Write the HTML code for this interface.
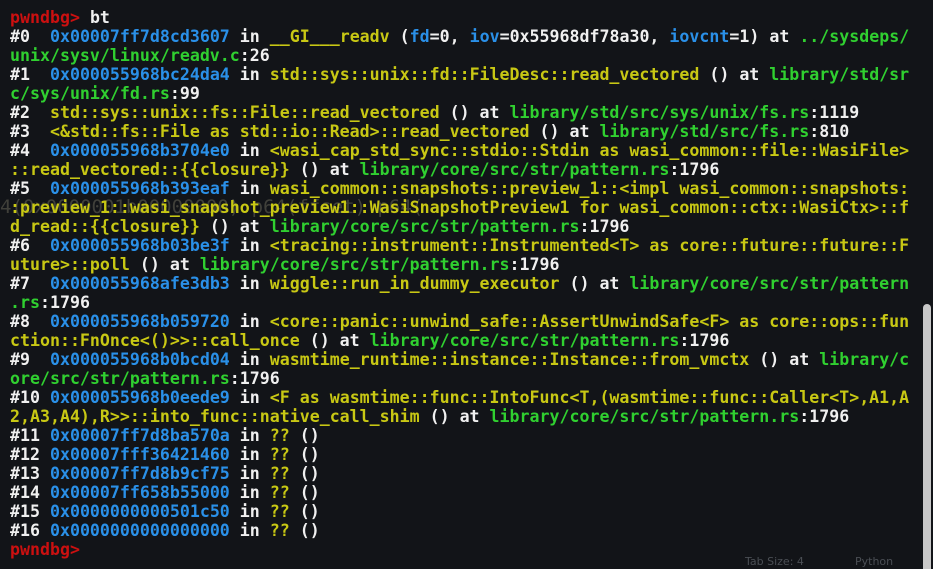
<!DOCTYPE html>
<html><head><meta charset="utf-8"><style>
html,body{margin:0;padding:0;background:#121418;width:933px;height:569px;overflow:hidden}
pre{position:absolute;left:10px;top:8px;margin:0;font-family:"DejaVu Sans Mono","Liberation Mono",monospace;font-weight:bold;font-size:16.6px;line-height:19px;color:#f0f0f0;white-space:pre}
.r{color:#cc1010}.b{color:#2a90e8}.y{color:#c8c814}.g{color:#30d030}.w{color:#f0f0f0}
.ghost{position:absolute;left:0;top:196px;font-family:"DejaVu Sans Mono",monospace;font-size:19px;color:#40403a;white-space:pre}
.sb{position:absolute;left:923px;top:304px;width:8px;height:265px;background:#c8c8c8;border-radius:4px 4px 0 0}
.st{position:absolute;top:555px;font-family:"DejaVu Sans",sans-serif;font-size:11px;color:#4a4e54}
</style></head><body>
<div class="ghost">4(0x0000001b00000000) p64(ffset) p64(</div>
<pre><span class="r">pwndbg&gt; </span>bt
#0  <span class="b">0x00007ff7d8cd3607</span> in <span class="y">__GI___readv</span> (<span class="b">fd</span>=0, <span class="b">iov</span>=0x55968df78a30, <span class="b">iovcnt</span>=1) at <span class="g">../sysdeps/</span>
<span class="g">unix/sysv/linux/readv.c</span>:26
#1  <span class="b">0x000055968bc24da4</span> in <span class="y">std::sys::unix::fd::FileDesc::read_vectored</span> () at <span class="g">library/std/sr</span>
<span class="g">c/sys/unix/fd.rs</span>:99
#2  <span class="y">std::sys::unix::fs::File::read_vectored</span> () at <span class="g">library/std/src/sys/unix/fs.rs</span>:1119
#3  <span class="y">&lt;&amp;std::fs::File as std::io::Read&gt;::read_vectored</span> () at <span class="g">library/std/src/fs.rs</span>:810
#4  <span class="b">0x000055968b3704e0</span> in <span class="y">&lt;wasi_cap_std_sync::stdio::Stdin as wasi_common::file::WasiFile&gt;</span>
<span class="y">::read_vectored::{{closure}}</span> () at <span class="g">library/core/src/str/pattern.rs</span>:1796
#5  <span class="b">0x000055968b393eaf</span> in <span class="y">wasi_common::snapshots::preview_1::&lt;impl wasi_common::snapshots:</span>
<span class="y">:preview_1::wasi_snapshot_preview1::WasiSnapshotPreview1 for wasi_common::ctx::WasiCtx&gt;::f</span>
<span class="y">d_read::{{closure}}</span> () at <span class="g">library/core/src/str/pattern.rs</span>:1796
#6  <span class="b">0x000055968b03be3f</span> in <span class="y">&lt;tracing::instrument::Instrumented&lt;T&gt; as core::future::future::F</span>
<span class="y">uture&gt;::poll</span> () at <span class="g">library/core/src/str/pattern.rs</span>:1796
#7  <span class="b">0x000055968afe3db3</span> in <span class="y">wiggle::run_in_dummy_executor</span> () at <span class="g">library/core/src/str/pattern</span>
<span class="g">.rs</span>:1796
#8  <span class="b">0x000055968b059720</span> in <span class="y">&lt;core::panic::unwind_safe::AssertUnwindSafe&lt;F&gt; as core::ops::fun</span>
<span class="y">ction::FnOnce&lt;()&gt;&gt;::call_once</span> () at <span class="g">library/core/src/str/pattern.rs</span>:1796
#9  <span class="b">0x000055968b0bcd04</span> in <span class="y">wasmtime_runtime::instance::Instance::from_vmctx</span> () at <span class="g">library/c</span>
<span class="g">ore/src/str/pattern.rs</span>:1796
#10 <span class="b">0x000055968b0eede9</span> in <span class="y">&lt;F as wasmtime::func::IntoFunc&lt;T,(wasmtime::func::Caller&lt;T&gt;,A1,A</span>
<span class="y">2,A3,A4),R&gt;&gt;::into_func::native_call_shim</span> () at <span class="g">library/core/src/str/pattern.rs</span>:1796
#11 <span class="b">0x00007ff7d8ba570a</span> in <span class="y">??</span> ()
#12 <span class="b">0x00007fff36421460</span> in <span class="y">??</span> ()
#13 <span class="b">0x00007ff7d8b9cf75</span> in <span class="y">??</span> ()
#14 <span class="b">0x00007ff658b55000</span> in <span class="y">??</span> ()
#15 <span class="b">0x0000000000501c50</span> in <span class="y">??</span> ()
#16 <span class="b">0x0000000000000000</span> in <span class="y">??</span> ()
<span class="r">pwndbg&gt; </span></pre>
<div class="sb"></div>
<div class="st" style="left:745px">Tab Size: 4</div>
<div class="st" style="left:855px">Python</div>
</body></html>
